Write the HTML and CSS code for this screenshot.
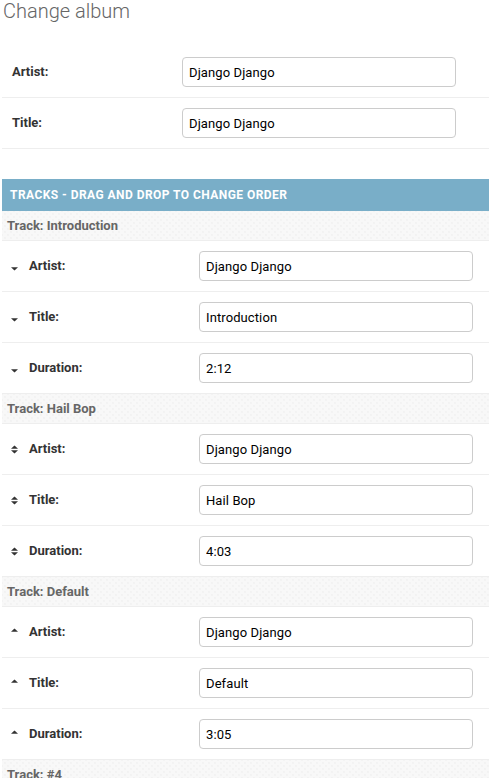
FILE: index.html
```html
<!DOCTYPE html>
<html lang="en">
<head>
<meta charset="utf-8">
<title>Change album</title>
<link rel="stylesheet" href="styles.css">
</head>
<body>
<div class="page">
  <h1 class="title">Change album</h1>

  <div class="fields">
    <div class="row">
      <label class="label">Artist:</label>
      <input class="input" type="text" value="Django Django">
    </div>
    <div class="row">
      <label class="label">Title:</label>
      <input class="input" type="text" value="Django Django">
    </div>
  </div>

  <div class="inline">
    <h2 class="inline-head">Tracks - drag and drop to change order</h2>

    <div class="track">
      <h3 class="track-head">Track: Introduction</h3>
      <div class="row">
        <span class="handle"><svg width="7" height="9" viewBox="0 0 7 9"><path d="M0 5.2 L3.5 8.6 L7 5.2Z"/></svg></span>
        <label class="label">Artist:</label>
        <input class="input" type="text" value="Django Django">
      </div>
      <div class="row">
        <span class="handle"><svg width="7" height="9" viewBox="0 0 7 9"><path d="M0 5.2 L3.5 8.6 L7 5.2Z"/></svg></span>
        <label class="label">Title:</label>
        <input class="input" type="text" value="Introduction">
      </div>
      <div class="row">
        <span class="handle"><svg width="7" height="9" viewBox="0 0 7 9"><path d="M0 5.2 L3.5 8.6 L7 5.2Z"/></svg></span>
        <label class="label">Duration:</label>
        <input class="input" type="text" value="2:12">
      </div>
    </div>

    <div class="track">
      <h3 class="track-head">Track: Hail Bop</h3>
      <div class="row">
        <span class="handle"><svg width="7" height="9" viewBox="0 0 7 9"><path d="M0 3.8 L3.5 0.4 L7 3.8Z"/><path d="M0 5.2 L3.5 8.6 L7 5.2Z"/></svg></span>
        <label class="label">Artist:</label>
        <input class="input" type="text" value="Django Django">
      </div>
      <div class="row">
        <span class="handle"><svg width="7" height="9" viewBox="0 0 7 9"><path d="M0 3.8 L3.5 0.4 L7 3.8Z"/><path d="M0 5.2 L3.5 8.6 L7 5.2Z"/></svg></span>
        <label class="label">Title:</label>
        <input class="input" type="text" value="Hail Bop">
      </div>
      <div class="row">
        <span class="handle"><svg width="7" height="9" viewBox="0 0 7 9"><path d="M0 3.8 L3.5 0.4 L7 3.8Z"/><path d="M0 5.2 L3.5 8.6 L7 5.2Z"/></svg></span>
        <label class="label">Duration:</label>
        <input class="input" type="text" value="4:03">
      </div>
    </div>

    <div class="track">
      <h3 class="track-head">Track: Default</h3>
      <div class="row">
        <span class="handle"><svg width="7" height="9" viewBox="0 0 7 9"><path d="M0 3.8 L3.5 0.4 L7 3.8Z"/></svg></span>
        <label class="label">Artist:</label>
        <input class="input" type="text" value="Django Django">
      </div>
      <div class="row">
        <span class="handle"><svg width="7" height="9" viewBox="0 0 7 9"><path d="M0 3.8 L3.5 0.4 L7 3.8Z"/></svg></span>
        <label class="label">Title:</label>
        <input class="input" type="text" value="Default">
      </div>
      <div class="row">
        <span class="handle"><svg width="7" height="9" viewBox="0 0 7 9"><path d="M0 3.8 L3.5 0.4 L7 3.8Z"/></svg></span>
        <label class="label">Duration:</label>
        <input class="input" type="text" value="3:05">
      </div>
    </div>

    <div class="track">
      <h3 class="track-head">Track: #4</h3>
      <div class="row">
        <span class="handle"><svg width="7" height="9" viewBox="0 0 7 9"><path d="M0 3.8 L3.5 0.4 L7 3.8Z"/></svg></span>
        <label class="label">Artist:</label>
        <input class="input" type="text" value="">
      </div>
    </div>
  </div>
</div>
</body>
</html>
```

FILE: styles.css
```css
html, body {
  margin: 0;
  padding: 0;
  background: #fff;
}

body {
  font-family: Roboto, "Liberation Sans", sans-serif;
  color: #333;
  overflow: hidden;
}

.page {
  padding: 0 0 0 2px;
}

.title {
  margin: 0 0 25px 1px;
  font-size: 20px;
  line-height: 22px;
  font-weight: 300;
  color: #666;
}

.fields {
  margin-bottom: 30px;
}

.row {
  display: flex;
  align-items: center;
  padding: 10px 10px;
  border-bottom: 1px solid #eee;
}

.handle {
  width: 17px;
  flex: 0 0 17px;
  display: flex;
  align-items: center;
  height: 9px;
}

.handle svg {
  display: block;
  fill: #333;
  margin-left: -1px;
}

.label {
  flex: 0 0 170px;
  width: 170px;
  font-size: 13px;
  font-weight: 700;
  color: #333;
  line-height: 16px;
}

.input {
  box-sizing: border-box;
  width: 274px;
  height: 30px;
  margin: 0;
  padding: 5px 6px;
  border: 1px solid #ccc;
  border-radius: 4px;
  font-family: Roboto, "Liberation Sans", sans-serif;
  font-size: 13px;
  letter-spacing: 0.1px;
  color: #000;
  background: #fff;
  outline: none;
}

.inline-head {
  margin: 0;
  height: 32px;
  line-height: 32px;
  padding: 0 8px;
  background: #79aec8;
  color: #fff;
  font-size: 12px;
  font-weight: 700;
  text-transform: uppercase;
  letter-spacing: 0.45px;
}

.track-head {
  margin: 0;
  box-sizing: border-box;
  height: 30px;
  line-height: 30px;
  padding: 0 5px;
  font-size: 13px;
  font-weight: 700;
  color: #666;
  background-color: #f8f8f8;
  background-image:
    radial-gradient(circle, #e8e8e8 0.5px, transparent 0.8px),
    radial-gradient(circle, #e8e8e8 0.5px, transparent 0.8px);
  background-size: 6px 6px, 6px 6px;
  background-position: 0 0, 3px 3px;
  border-bottom: 1px solid #eee;
}
```
